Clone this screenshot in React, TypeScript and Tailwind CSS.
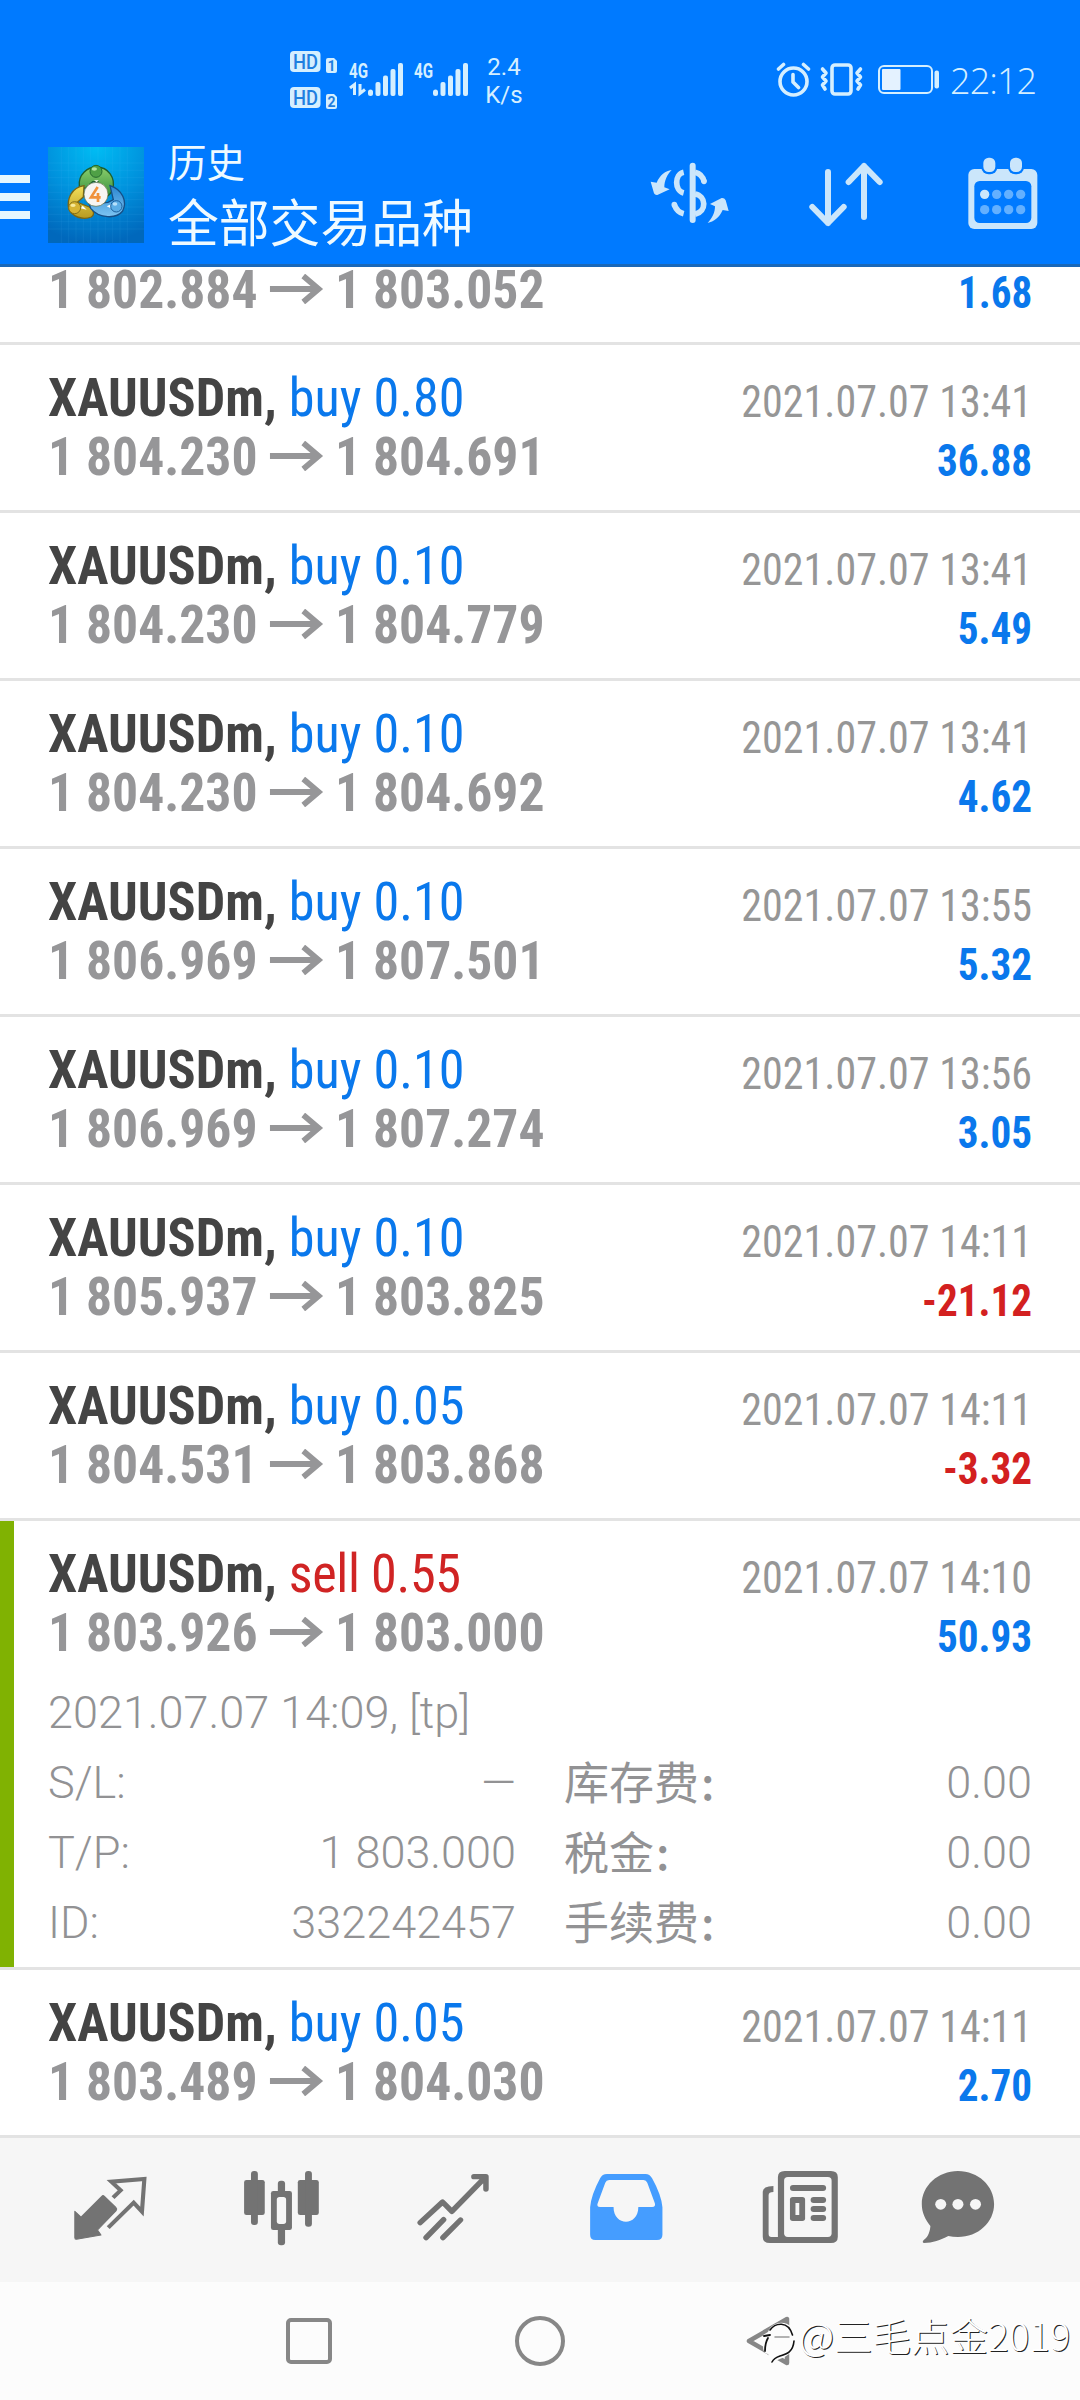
import { ReactNode } from 'react';

type Deal = {
  side: 'buy' | 'sell';
  volume: string;
  open: string;
  close: string;
  time: string;
  profit: string;
  expanded?: boolean;
};

const deals: Deal[] = [
  { side: 'buy', volume: '0.80', open: '1 804.230', close: '1 804.691', time: '2021.07.07 13:41', profit: '36.88' },
  { side: 'buy', volume: '0.10', open: '1 804.230', close: '1 804.779', time: '2021.07.07 13:41', profit: '5.49' },
  { side: 'buy', volume: '0.10', open: '1 804.230', close: '1 804.692', time: '2021.07.07 13:41', profit: '4.62' },
  { side: 'buy', volume: '0.10', open: '1 806.969', close: '1 807.501', time: '2021.07.07 13:55', profit: '5.32' },
  { side: 'buy', volume: '0.10', open: '1 806.969', close: '1 807.274', time: '2021.07.07 13:56', profit: '3.05' },
  { side: 'buy', volume: '0.10', open: '1 805.937', close: '1 803.825', time: '2021.07.07 14:11', profit: '-21.12' },
  { side: 'buy', volume: '0.05', open: '1 804.531', close: '1 803.868', time: '2021.07.07 14:11', profit: '-3.32' },
  { side: 'sell', volume: '0.55', open: '1 803.926', close: '1 803.000', time: '2021.07.07 14:10', profit: '50.93', expanded: true },
  { side: 'buy', volume: '0.05', open: '1 803.489', close: '1 804.030', time: '2021.07.07 14:11', profit: '2.70' },
];

const details = [
  ['S/L:', '—', '库存费', '0.00'],
  ['T/P:', '1 803.000', '税金', '0.00'],
  ['ID:', '332242457', '手续费', '0.00'],
];

function Signal({ data }: { data?: boolean }) {
  return (
    <svg width="56" height="40" viewBox="0 0 56 40" fill="#d5efff">
      <text x="0" y="18" fontSize="20" fontWeight="700" textLength="19" lengthAdjust="spacingAndGlyphs" className="font-['Roboto']">
        4G
      </text>
      {data && (
        <path d="M1 28 L5.500 24.500 V35 M11 24 V33.500 L16 29.500" fill="none" stroke="#d5efff" strokeWidth="3" />
      )}
      <rect x="19" y="29.500" width="5" height="6.500" rx="2.500" />
      <rect x="26.500" y="22" width="5" height="14" rx="2" />
      <rect x="34" y="15.500" width="5" height="20.500" rx="2" />
      <rect x="41.500" y="9" width="5" height="27" rx="2" />
      <rect x="49" y="3" width="5" height="33" rx="2" />
    </svg>
  );
}

function HdBadge({ n }: { n: string }) {
  return (
    <svg width="48" height="24" viewBox="0 0 48 24">
      <rect x="0" y="1" width="30.500" height="21" rx="4" fill="#d5efff" />
      <text x="3" y="18.500" fontSize="20" fontWeight="500" fill="#1f7fe0" textLength="25" lengthAdjust="spacingAndGlyphs" className="font-['Roboto']">
        HD
      </text>
      <path d="M36 10 Q36 8 38 8 H44 L47 11 V21 Q47 23 45 23 H38 Q36 23 36 21 Z" fill="#d5efff" />
      <text x="41.500" y="20.500" fontSize="14" fontWeight="700" textAnchor="middle" fill="#1f7fe0" className="font-['Roboto']">
        {n}
      </text>
    </svg>
  );
}

function StatusBar() {
  return (
    <div className="flex h-[130px] items-start">
      <div className="ml-[290px] mt-[50px] flex flex-col gap-3">
        <HdBadge n="1" />
        <HdBadge n="2" />
      </div>
      <div className="ml-[11px] mt-[60px] flex gap-[9px]">
        <Signal data />
        <Signal />
      </div>
      <div className="ml-[9px] mt-[53px] w-[50px] text-center text-[24px] leading-[28px] text-[#d5efff]">
        2.4
        <br />
        K/s
      </div>
      <div className="ml-auto mr-[41px] mt-[60px] flex text-[#d5efff]">
        <svg width="36" height="40" viewBox="0 0 36 40" fill="none" stroke="currentColor" strokeWidth="3.600" strokeLinecap="round" strokeLinejoin="round">
          <circle cx="18.500" cy="21.500" r="13.500" />
          <path d="M18 14.500 V22 L23.500 27.500 M3.500 9 L8.500 4.500 M28.500 4.500 L33.500 9" />
        </svg>
        <svg className="ml-[8px]" width="46" height="40" viewBox="0 0 46 40" fill="none" stroke="currentColor" strokeWidth="3.600" strokeLinecap="round" strokeLinejoin="round">
          <rect x="13" y="5" width="19" height="29" rx="3" />
          <path d="M3.500 9 L7 13 L3.500 17 L7 21 L3.500 25 L6 29 M41.500 9 L38 13 L41.500 17 L38 21 L41.500 25 L39 29" />
        </svg>
        <svg className="ml-[12px]" width="64" height="40" viewBox="0 0 64 40">
          <rect x="2" y="6" width="53" height="27" rx="5" fill="none" stroke="currentColor" strokeWidth="2" />
          <rect x="5" y="9" width="18.500" height="21" rx="1" fill="#e4f2ff" />
          <rect x="57.500" y="10.500" width="4.500" height="18" rx="2" fill="currentColor" />
        </svg>
        <span className="ml-[9px] mt-px w-[89px] whitespace-nowrap font-['Open_Sans'] text-[36px] font-light leading-[40px] tracking-[-0.9px]">
          22:12
        </span>
      </div>
    </div>
  );
}

function AppLogo() {
  return (
    <svg width="96" height="96" viewBox="0 0 288 288">
      <defs>
        <radialGradient id="sky" cx="0.5" cy="0" r="1">
          <stop offset="0" stopColor="#00bdf4" />
          <stop offset="0.55" stopColor="#0090dc" />
          <stop offset="1" stopColor="#0068bc" />
        </radialGradient>
        <linearGradient id="green" x1="0" y1="0" x2="0" y2="1">
          <stop offset="0" stopColor="#8ccf6c" />
          <stop offset="1" stopColor="#2f8a3a" />
        </linearGradient>
        <linearGradient id="gold" x1="0" y1="0" x2="0" y2="1">
          <stop offset="0" stopColor="#f3e05a" />
          <stop offset="1" stopColor="#b89a20" />
        </linearGradient>
        <linearGradient id="azure" x1="0" y1="0" x2="0" y2="1">
          <stop offset="0" stopColor="#2b86d0" />
          <stop offset="1" stopColor="#7cc4f2" />
        </linearGradient>
      </defs>
      <rect width="288" height="288" fill="url(#sky)" />
      <path
        d="M40 0 V288 M62 0 V288 M84 0 V288 M106 0 V288 M128 0 V288 M150 0 V288 M172 0 V288 M194 0 V288 M216 0 V288 M238 0 V288 M0 48 H288 M0 70 H288 M0 92 H288 M0 114 H288 M0 136 H288 M0 158 H288 M0 180 H288 M0 202 H288 M0 224 H288 M0 246 H288"
        stroke="#5fc8ff"
        strokeOpacity="0.14"
        strokeWidth="2"
      />
      <path d="M94 118 C90 82 118 60 146 60 C180 60 204 92 194 128 C184 150 160 160 144 152 L150 104 L134 104 L112 124 Z" fill="url(#green)" stroke="#1f5f2c" strokeWidth="4" />
      <path d="M108 116 C70 122 56 156 62 186 C74 210 104 220 130 210 C142 202 136 186 124 180 L88 166 L106 150 Z" fill="url(#gold)" stroke="#7a6614" strokeWidth="4" />
      <path d="M186 116 C224 128 238 164 224 192 C206 216 154 216 128 184 L124 172 L180 166 L196 158 Z" fill="url(#azure)" stroke="#164f86" strokeWidth="4" />
      <path d="M104 176 L116 188 L98 184 Z M176 178 L192 170 L188 184 Z M138 100 L152 100 L146 106 Z" fill="#fff" />
      <circle cx="144" cy="73" r="18" fill="#4fa046" stroke="#24692e" strokeWidth="3" />
      <circle cx="80" cy="182" r="18" fill="#d6b434" stroke="#84701a" strokeWidth="3" />
      <circle cx="205" cy="178" r="17" fill="#5bade6" stroke="#1c5f9c" strokeWidth="3" />
      <ellipse cx="139" cy="66" rx="8" ry="5" fill="#b5e3a0" />
      <ellipse cx="75" cy="175" rx="8" ry="5" fill="#f7ea9a" />
      <ellipse cx="201" cy="171" rx="7" ry="5" fill="#b8e0fa" />
      <circle cx="144" cy="142" r="36" fill="#f7f5f2" stroke="#5b6a3c" strokeWidth="2" />
      <path d="M149 120 L129 151 H158 M150 138 V165" fill="none" stroke="#f0923c" strokeWidth="8" />
    </svg>
  );
}

function Header() {
  return (
    <div className="flex h-[137px] items-start border-b-[3px] border-[#1a68b8]">
      <div className="mt-[45px] flex w-[30px] flex-col gap-[10px]">
        <div className="h-2 bg-[#e6f7ff]" />
        <div className="h-2 bg-[#e6f7ff]" />
        <div className="h-2 bg-[#e6f7ff]" />
      </div>
      <div className="ml-[18px] mt-[17px]">
        <AppLogo />
      </div>
      <div className="ml-[24px] mt-[5px] w-[306px] whitespace-nowrap font-['Noto_Sans_CJK_SC',sans-serif] text-[#effaff]">
        <div className="text-[38.5px] leading-[50px]">历史</div>
        <div className="mt-[4px] text-[50.8px] leading-[62px]">全部交易品种</div>
      </div>
      <svg className="ml-[174px] mt-[30px]" width="84" height="66" viewBox="85 90 252 198" fill="#cbe6fb">
        <path d="M156 120 C138 122 120 136 111 158 L93 155 L103 190 Q106 196 113 195 L150 178 L134 172 C134 152 142 134 156 120 Z" />
        <path d="M264 279 C282 275 300 262 309 240 L327 243 L318 211 Q314 203 306 204 L271 222 L286 229 C286 248 278 264 264 279 Z" />
        <rect x="210" y="98" width="18" height="181" rx="9" />
        <path d="M192 127 C164 133 164 182 192 189 M164 224 Q172 246 192 251 M226 127 Q248 132 253 155 M226 192 C260 198 262 244 226 253" fill="none" stroke="#cbe6fb" strokeWidth="17" />
        <circle cx="253" cy="154" r="8.500" />
        <circle cx="164" cy="224" r="8.500" />
      </svg>
      <svg className="ml-[75px] mt-[30px]" width="78" height="70" viewBox="561 90 234 210" fill="none" stroke="#cbe6fb" strokeWidth="18" strokeLinecap="round" strokeLinejoin="round">
        <path d="M624 126 V279 M577 231 L624 279 L671 231 M732 261 V108 M686 156 L732 108 L779 156" />
      </svg>
      <svg className="ml-[81px] mt-[26px]" width="74" height="76" viewBox="1037 78 222 228">
        <rect x="1044" y="117" width="207" height="180" rx="18" fill="#cbe6fb" />
        <rect x="1062" y="153" width="171" height="126" rx="16" fill="#007aff" />
        <rect x="1083" y="77" width="48" height="56" rx="22" fill="#007aff" />
        <rect x="1163" y="77" width="48" height="56" rx="22" fill="#007aff" />
        <rect x="1089" y="83" width="36" height="43" rx="16" fill="#cbe6fb" />
        <rect x="1169" y="83" width="36" height="43" rx="16" fill="#cbe6fb" />
        <g fill="#63b0ff">
          <circle cx="1093" cy="193" r="14" fill="#cbe6fb" />
          <circle cx="1129" cy="193" r="14" />
          <circle cx="1165" cy="193" r="14" />
          <circle cx="1201" cy="193" r="14" />
          <circle cx="1093" cy="239" r="14" />
          <circle cx="1129" cy="239" r="14" />
          <circle cx="1165" cy="239" r="14" />
          <circle cx="1201" cy="239" r="14" />
        </g>
      </svg>
    </div>
  );
}

function Prices({ open, close }: { open: string; close: string }) {
  return (
    <div className="flex origin-left scale-x-[0.956] text-[54px] font-bold leading-[59px] text-[#969698]">
      <span>{open}</span>
      <svg className="ml-[13px] mr-[10px] mt-[14px]" width="58" height="30" viewBox="0 0 58 30" fill="none" stroke="#969698" strokeWidth="6">
        <path d="M0 15 H52 M35 2 L51 15 L35 28" />
      </svg>
      <span>{close}</span>
    </div>
  );
}

function Profit({ value }: { value: string }) {
  return (
    <div
      className={`origin-right scale-x-[0.915] text-[45px] font-bold leading-[59px] ${value.startsWith('-') ? 'text-[#d32020]' : 'text-[#0a78ec]'}`}
    >
      {value}
    </div>
  );
}

function DealRow({ deal }: { deal: Deal }) {
  return (
    <div className={`relative border-b-[3px] border-[#e3e3e3] pl-[48px] pr-[48px] ${deal.expanded ? 'h-[449px]' : 'h-[168px]'}`}>
      {deal.expanded && <div className="absolute inset-y-0 left-0 w-[14px] bg-[#80b202]" />}
      <div className="flex justify-between font-['Roboto_Condensed','Roboto',sans-serif] [font-stretch:75%]">
        <div className="pt-[23px]">
          <div className="origin-left scale-x-[0.967] whitespace-nowrap text-[54px] leading-[59px]">
            <span className="font-bold text-[#444]">XAUUSDm, </span>
            <span className={deal.side === 'buy' ? 'text-[#0a78ec]' : 'tracking-[-0.4px] text-[#d02424]'}>
              {deal.side} {deal.volume}
            </span>
          </div>
          <Prices open={deal.open} close={deal.close} />
        </div>
        <div className="pt-[27px] text-right">
          <div className="origin-right scale-x-[0.935] text-[45px] leading-[59px] text-[#969696]">{deal.time}</div>
          <Profit value={deal.profit} />
        </div>
      </div>
      {deal.expanded && (
        <div className="mt-[12px] text-[45px] font-[350] leading-[70px] text-[#929294]">
          <div>2021.07.07 14:09, [tp]</div>
          {details.map((d) => (
            <div key={d[0]} className="flex h-[70px]">
              <span className="w-[140px]">{d[0]}</span>
              <span className="w-[328px] text-right">{d[1]}</span>
              <span className="ml-[48px] w-[200px] font-['Noto_Sans_CJK_SC',sans-serif] font-normal leading-[66px]">
                {d[2]}
                <span className="pl-[2px] font-medium">:</span>
              </span>
              <span className="ml-auto">{d[3]}</span>
            </div>
          ))}
        </div>
      )}
    </div>
  );
}

function NavIcon({ x, w, className, children }: { x: number; w: number; className: string; children: ReactNode }) {
  return (
    <svg
      className={className}
      width={w / 2.904}
      height="80"
      viewBox={`${x} 144 ${w} 240`}
      preserveAspectRatio="none"
      fill="#737373"
      strokeLinejoin="round"
      strokeLinecap="round"
    >
      {children}
    </svg>
  );
}

function TabBar() {
  return (
    <div className="flex h-[144px] items-start bg-[#f6f6f6] pt-[30px]">
      <NavIcon x={203} w={232} className="ml-[70px]">
        <path d="M217 274 L235 291 L296 228 Q299 225 303 229 L336 262 Q341 267 337 272 L283 330 L293 345 L222 358 Q217 358 217 353 Z" stroke="#737373" strokeWidth="3" />
        <path d="M328 233 L350 211 L323 185 L419 177 L412 275 L388 248 L314 323" fill="none" stroke="#737373" strokeWidth="12" strokeLinejoin="miter" strokeLinecap="butt" />
      </NavIcon>
      <NavIcon x={700} w={232} className="ml-[91px]">
        <rect x="709" y="180" width="60" height="105" rx="7" />
        <rect x="729" y="153" width="20" height="162" rx="9" />
        <rect x="865" y="180" width="61" height="105" rx="7" />
        <rect x="886" y="153" width="20" height="167" rx="9" />
        <rect x="807" y="182" width="21" height="60" rx="9" />
        <rect x="807" y="310" width="21" height="66" rx="9" />
        <rect x="787" y="213" width="61" height="117" rx="7" />
        <rect x="804" y="231" width="27" height="81" rx="8" fill="#f6f6f6" />
      </NavIcon>
      <NavIcon x={1202} w={232} className="ml-[93px]">
        <path d="M1220 308 L1285 246 L1312 274 L1408 173 M1376 170 H1411 V207 M1237 353 L1288 299 M1286 353 L1337 300" fill="none" stroke="#737373" strokeWidth="16" />
      </NavIcon>
      <NavIcon x={135} w={232} className="ml-[92px]">
        <path d="M196 162 H308 Q320 162 327 175 Q354 225 357 262 V344 Q357 360 341 360 H162 Q147 360 147 344 V262 Q150 225 176 175 Q182 162 196 162 Z" fill="#459dff" />
        <path d="M202 180 H302 Q310 180 313 188 L335 250 Q338 261 327 261 H287 C287 320 215 320 215 261 H176 Q165 261 169 250 L191 188 Q194 180 202 180 Z" fill="#f6f6f6" />
      </NavIcon>
      <NavIcon x={638} w={232} className="ml-[94px]">
        <path d="M710 153 H844 Q864 153 864 172 V350 Q864 369 844 369 H667 Q646 369 646 350 V216 Q646 198 677 198 V216 Q663 216 663 226 V342 Q663 351 671 351 H690 V172 Q690 153 710 153 Z" />
        <rect x="708" y="171" width="138" height="180" rx="11" fill="#f6f6f6" />
        <rect x="725" y="195" width="105" height="18" rx="9" />
        <rect x="725" y="231" width="44" height="72" rx="8" />
        <rect x="741" y="249" width="11" height="36" fill="#f6f6f6" />
        <rect x="785" y="231" width="45" height="18" rx="9" />
        <rect x="785" y="258" width="45" height="18" rx="9" />
        <rect x="785" y="285" width="45" height="18" rx="9" />
      </NavIcon>
      <NavIcon x={1097} w={232} className="ml-[79px]">
        <path d="M1213 153 C1272 153 1318 198 1318 252 C1318 307 1272 351 1213 351 Q1198 351 1185 348 C1162 360 1140 369 1114 369 Q1108 367 1113 361 C1128 350 1132 332 1133 318 C1118 298 1108 278 1108 252 C1108 198 1155 153 1213 153 Z" />
        <circle cx="1163" cy="253" r="16" fill="#f6f6f6" />
        <circle cx="1213" cy="253" r="16" fill="#f6f6f6" />
        <circle cx="1264" cy="253" r="16" fill="#f6f6f6" />
      </NavIcon>
    </div>
  );
}

function SystemNav() {
  return (
    <div className="relative flex h-[118px] items-start bg-[#fcfcfc] pt-[34px]">
      <div className="ml-[286px] mt-[2px] h-[46px] w-[46px] rounded-[5px] border-[4px] border-[#878787]" />
      <div className="ml-[183px] h-[50px] w-[50px] rounded-full border-[4px] border-[#878787]" />
      <svg className="ml-[181px]" width="45" height="50" viewBox="0 0 45 50" fill="none" stroke="#878787" strokeWidth="4.500" strokeLinejoin="round">
        <path d="M41 3 V47 L3 25 Z" />
      </svg>
      <div className="absolute left-[760px] top-[36px] flex items-start">
        <svg width="39" height="50" viewBox="0 0 39 50" fill="none" strokeLinecap="round">
          <path d="M3 17 L8 14 C12 2 32 0 36 18 C38 32 30 38 12 44 L8 36 C2 36 2 26 5 20 Z" fill="#fcfcfc" />
          <path d="M10 12 C15 5 28 2 32.500 17 M34 23 C33 34 27 36 20 38 Q14 40 12 44" stroke="#111" strokeWidth="1.600" />
          <path d="M4 18 L10 17 M8 20 Q5 25 5 33" stroke="#111" strokeWidth="1.800" />
          <path d="M15 19 H29" stroke="#999" strokeWidth="1.500" />
        </svg>
        <span className="-mt-[8px] whitespace-nowrap font-['Noto_Sans_CJK_SC',sans-serif] text-[38.5px] font-light leading-[48px] text-white [text-shadow:1px_1px_0_#222]">
          @三毛点金2019
        </span>
      </div>
    </div>
  );
}

export default function App() {
  return (
    <div className="flex h-[2400px] w-[1080px] flex-col overflow-hidden bg-white font-['Roboto',sans-serif]">
      <div className="bg-[#007aff]">
        <StatusBar />
        <Header />
      </div>

      {/* row scrolled partly under the header */}
      <div className="flex h-[78px] items-end justify-between border-b-[3px] border-[#e3e3e3] px-[48px] font-['Roboto_Condensed','Roboto',sans-serif] [font-stretch:75%]">
        <div className="pb-[23px]">
          <Prices open="1 802.884" close="1 803.052" />
        </div>
        <div className="pb-[20px]">
          <Profit value="1.68" />
        </div>
      </div>

      {deals.map((deal, i) => (
        <DealRow key={i} deal={deal} />
      ))}

      <TabBar />
      <SystemNav />
    </div>
  );
}
